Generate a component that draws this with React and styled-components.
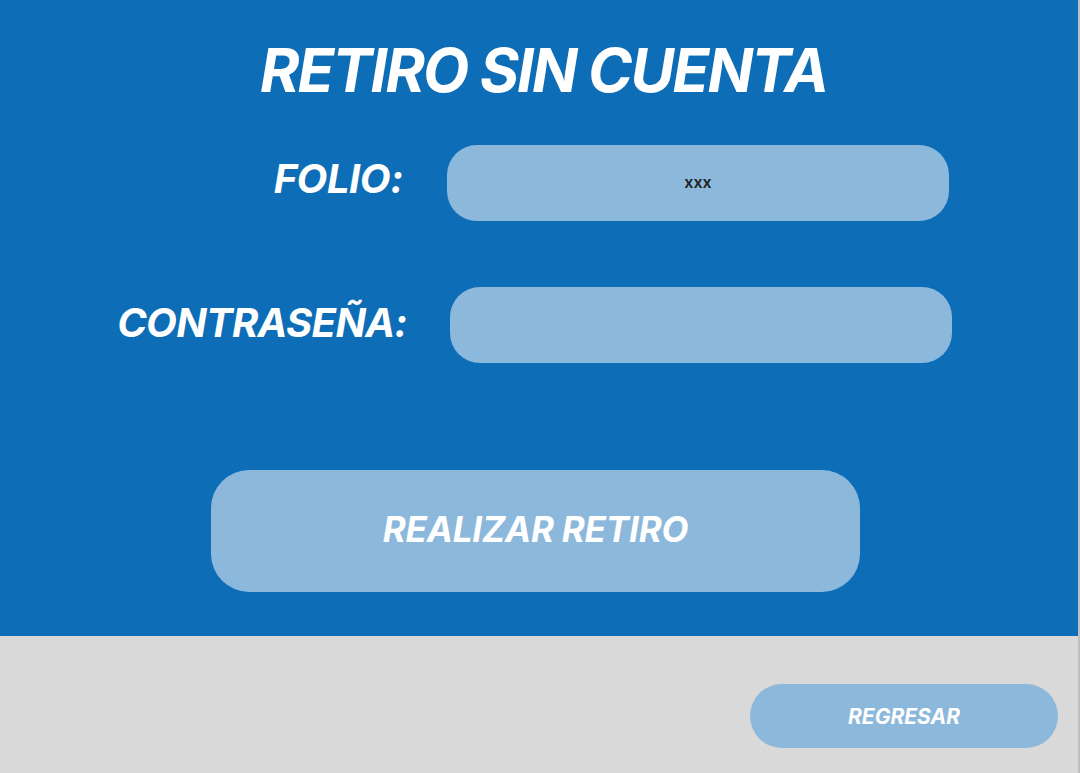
import React from "react";
import styled, { createGlobalStyle } from "styled-components";

const Global = createGlobalStyle`
  html, body { margin: 0; padding: 0; }
  body { font-family: Inter, "Noto Sans", sans-serif; background: #d9d9d9; }
  * { box-sizing: border-box; }
`;

const Page = styled.div`
  width: 1080px;
  height: 773px;
  display: flex;
  flex-direction: column;
  border-right: 2px solid rgba(0, 0, 0, 0.12);
`;

const Hero = styled.section`
  height: 636px;
  background: #0e6db7;
  display: flex;
  flex-direction: column;
  align-items: center;
  padding-top: 40px;
`;

const Title = styled.h1`
  margin: 0 0 0 9px;
  font-size: 60px;
  line-height: 1;
  font-weight: 700;
  font-style: italic;
  color: #fff;
  letter-spacing: -1.9px;
`;

const Form = styled.div`
  margin-top: 45px;
  display: flex;
  flex-direction: column;
  gap: 66px;
  width: 100%;
`;

const Row = styled.div`
  display: grid;
  grid-template-columns: ${(p) => p.$labelW}px 502px;
  column-gap: ${(p) => p.$gap}px;
  align-items: center;
  height: 76px;
`;

const Label = styled.label`
  justify-self: end;
  font-size: 40px;
  line-height: 1;
  font-weight: 700;
  font-style: italic;
  color: #fff;
  margin-bottom: ${(p) => p.$lift}px;
  letter-spacing: ${(p) => p.$track}px;
`;

const Field = styled.div`
  height: 76px;
  border-radius: 30px;
  background: #8bb8db;
  display: flex;
  align-items: center;
  justify-content: center;
  font-size: 16px;
  font-weight: 600;
  color: #222;
  padding-bottom: 2px;
`;

const MainButton = styled.button`
  margin: 107px 0 0 -7px;
  width: 649px;
  height: 122px;
  border: none;
  border-radius: 38px;
  background: #8bb8db;
  color: #fff;
  font-family: inherit;
  font-size: 35px;
  font-weight: 700;
  font-style: italic;
  letter-spacing: -0.2px;
  display: flex;
  align-items: center;
  justify-content: center;
  padding: 0 0 4px 0;
`;

const Footer = styled.footer`
  flex: 1;
  background: #d9d9d9;
  display: flex;
  justify-content: flex-end;
  align-items: flex-start;
  padding: 48px 20px 0 0;
`;

const BackButton = styled.button`
  width: 308px;
  height: 64px;
  border: none;
  border-radius: 32px;
  background: #8bb8db;
  color: #fff;
  font-family: inherit;
  font-size: 21px;
  font-weight: 700;
  font-style: italic;
  display: flex;
  align-items: center;
  justify-content: center;
  padding: 0;
`;

export default function App() {
  return (
    <>
      <Global />
      <Page>
        <Hero>
          <Title>RETIRO SIN CUENTA</Title>
          <Form>
            <Row $labelW={403} $gap={44}>
              <Label $lift={8} $track={-0.5}>FOLIO:</Label>
              <Field>xxx</Field>
            </Row>
            <Row $labelW={407} $gap={43}>
              <Label $lift={4} $track={-0.7}>CONTRASEÑA:</Label>
              <Field />
            </Row>
          </Form>
          <MainButton>REALIZAR RETIRO</MainButton>
        </Hero>
        <Footer>
          <BackButton>REGRESAR</BackButton>
        </Footer>
      </Page>
    </>
  );
}
